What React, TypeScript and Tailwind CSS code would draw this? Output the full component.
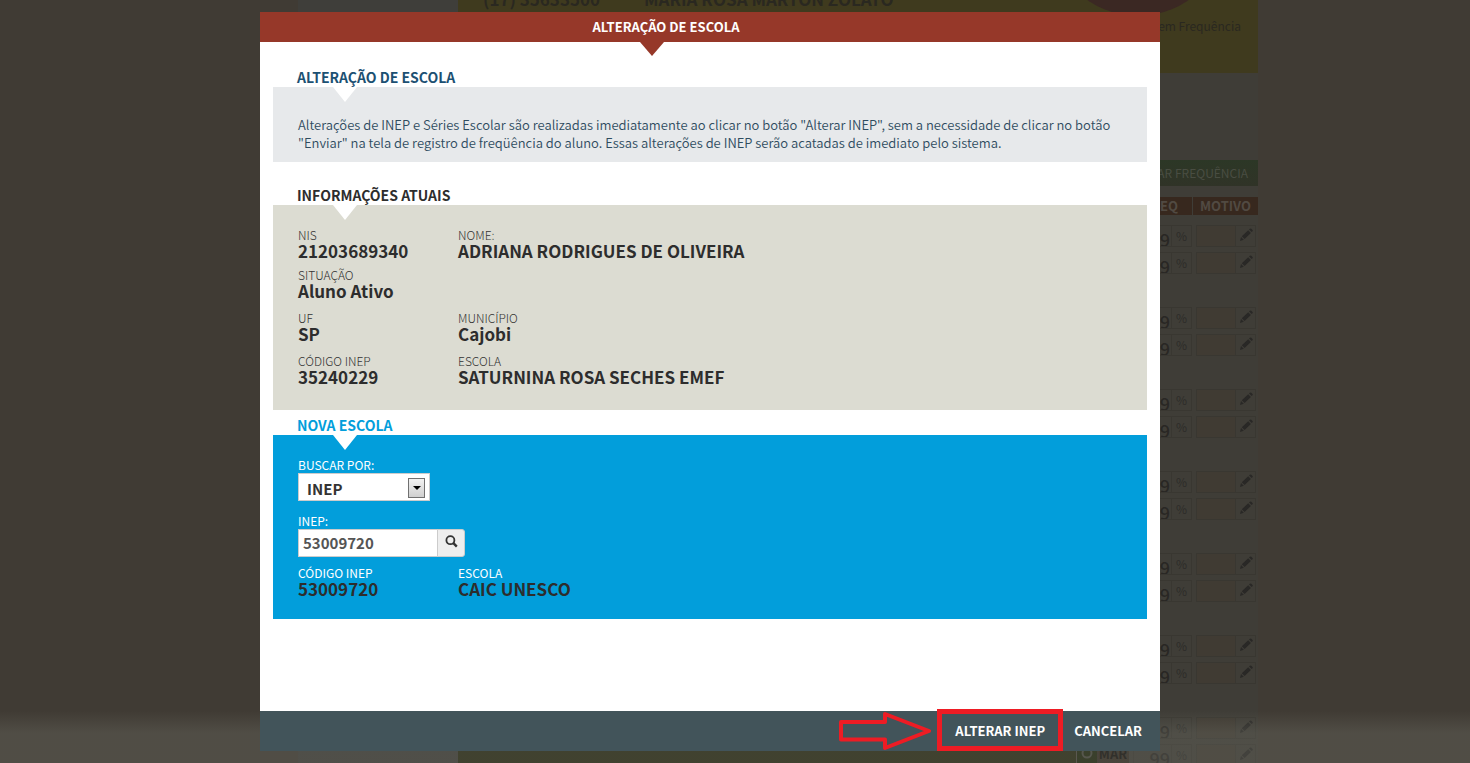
const F = "font-['Noto_Sans_CJK_JP','Noto_Sans',sans-serif]";

const pairs = [0, 1, 2, 3, 4, 5, 6];

function Pencil() {
  return (
    <svg viewBox="0 0 14 14" className="h-[14px] w-[14px]" fill="#292826" aria-hidden="true">
      <path d="M1 13l1-4 2.800 2.800zM2.800 8.300L9.200 2.200l2.700 2.700-6.300 6.200zM10 1.500l.8-.8q.8-.6 1.500 0l1.200 1.200q.6.700 0 1.400l-.8.800z" />
    </svg>
  );
}

function FrequencyRow({ month, value = "9" }: { month?: string; value?: string }) {
  return (
    <div className="flex h-[27px] items-start justify-end gap-1 pr-[2px] pt-[2px]">
      {month && (
        <div className="h-[22px] w-8 shrink-0 bg-[#352d24] text-center text-[13px] font-bold leading-[20px] text-[#0d0b09]">{month}</div>
      )}
      <div className="flex h-[22px] w-[59px] shrink-0 border border-[#393731]">
        <span className="flex-1 overflow-hidden pr-px text-right text-[18px] font-medium leading-[26px] text-[#292724]">{value}</span>
        <span className="w-5 border-l border-[#393731] text-center text-[12px] leading-[20px] text-[#2d2c29]">%</span>
      </div>
      <div className="flex h-[22px] w-[60px] shrink-0 border border-[#393731]">
        <span className="flex-1 bg-[#403b33]" />
        <span className="flex w-5 justify-center border-l border-[#393731] pt-[2px]">
          <Pencil />
        </span>
      </div>
    </div>
  );
}

function Backdrop() {
  return (
    <div className="absolute inset-0 overflow-hidden bg-[#403b34] pl-[298px]" aria-hidden="true">
      <div className="flex h-full w-[960px] bg-[#3f3d37]">
        <div className="w-40 shrink-0 bg-[#3f3e3a]" />
        <div className="flex flex-1 flex-col">
          <div className="relative h-[73px] shrink-0 overflow-hidden bg-[#3f3a1e] px-[25px] text-[#2a2820]">
            <div className="-mt-[14px] flex gap-[44px] text-[17px] font-bold leading-[26px]">
              <span>(17) 35633500</span>
              <span>MARIA ROSA MARTON ZOLATO</span>
            </div>
            <svg className="absolute -top-[160px] right-8 h-44 w-44" viewBox="0 0 176 176">
              <circle cx="88" cy="88" r="88" fill="#3b2823" />
            </svg>
            <span className="absolute right-[17px] top-4 text-[12px] leading-[20px]">Sem Frequência</span>
          </div>
          <div className="mt-[87px] flex h-[26px] shrink-0 items-center justify-end bg-linear-to-b from-[#2c3726] to-[#303327] pr-[10px] text-[12px] text-[#494d42]">
            AR FREQUÊNCIA
          </div>
          <div className="mb-[8px] mt-[11px] flex h-[18px] shrink-0 justify-end gap-px text-[13px] font-bold leading-[18px] text-[#514a42]">
            <span className="w-[60px] bg-[#37281e] pr-[14px] text-right">EQ</span>
            <span className="w-[65px] bg-[#37281e] text-center">MOTIVO</span>
          </div>
          <div className="flex min-h-0 flex-1">
            <div className="mt-[528px] flex-1 border-r border-[#514d46] bg-[#26280f]" />
            <div className="mt-[528px] w-5 bg-[#1c250a]">
              <svg viewBox="0 0 12 12" className="mx-auto -mt-1 h-3 w-3" fill="none" stroke="#4a4b42">
                <circle cx="6" cy="6" r="4.500" strokeWidth="2" />
              </svg>
            </div>
            <div className="w-[161px]">
              {pairs.map((p) => (
                <div key={p} className="h-[82px]">
                  <FrequencyRow />
                  {p === pairs.length - 1 ? <FrequencyRow month="MAR" value="99" /> : <FrequencyRow />}
                </div>
              ))}
            </div>
          </div>
        </div>
      </div>
      <div className="absolute inset-x-0 bottom-0 h-[52px] bg-linear-to-b from-transparent to-[#68685f]/40 to-[22px]" />
    </div>
  );
}

function Notch() {
  return (
    <svg className="absolute left-[60px] top-0 h-[15px] w-6" viewBox="0 0 24 15" aria-hidden="true">
      <path d="M0 0h24L12 15z" fill="#fff" />
    </svg>
  );
}

function Field({ label, value, light = false }: { label: string; value: string; light?: boolean }) {
  return (
    <div>
      <dt className={light ? "text-[12px] leading-[16px] text-white" : "text-[12px] font-light leading-[16px] text-[#333]"}>{label}</dt>
      <dd className="text-[17px] font-bold leading-[16px] text-[#2d2d2d]">{value}</dd>
    </div>
  );
}

export default function App() {
  return (
    <div className={`relative min-h-screen overflow-hidden pb-3 pl-[260px] pr-[310px] pt-3 ${F}`}>
      <Backdrop />
      <div role="dialog" aria-labelledby="dialog-title" className="relative flex min-h-[739px] flex-col bg-white">
        <header className="relative h-[30px] bg-[#963829] pr-[88px] text-center">
          <h1 id="dialog-title" className="text-[13px] font-bold leading-[30px] text-white">ALTERAÇÃO DE ESCOLA</h1>
          <svg className="absolute left-[380px] top-[30px] h-[14px] w-6" viewBox="0 0 24 14" aria-hidden="true">
            <path d="M0 0h24L12 14z" fill="#963829" />
          </svg>
        </header>

        <main className="flex-1 px-[13px]">
          <section className="pt-[25px]">
            <h2 className="pl-6 text-[14px] font-bold leading-[20px] text-[#1c5072]">ALTERAÇÃO DE ESCOLA</h2>
            <div className="relative h-[75px] bg-[#e7e9eb] px-[25px] pt-[29px]">
              <Notch />
              <p className="text-[13px] font-[350] leading-[18px] text-[#2f4c5f]">
                Alterações de INEP e Séries Escolar são realizadas imediatamente ao clicar no botão "Alterar INEP", sem a necessidade de clicar no botão "Enviar" na tela de registro de freqüência do aluno. Essas alterações de INEP serão acatadas de imediato pelo sistema.
              </p>
            </div>
          </section>

          <section className="pt-[23px]">
            <h2 className="pl-6 text-[14px] font-bold leading-[20px] text-[#2d2d2d]">INFORMAÇÕES ATUAIS</h2>
            <div className="relative h-[205px] bg-[#dcdcd2] px-[25px] pt-[22px]">
              <Notch />
              <dl className="grid grid-cols-[160px_1fr]">
                <div className="h-10"><Field label="NIS" value="21203689340" /></div>
                <div className="h-10"><Field label="NOME:" value="ADRIANA RODRIGUES DE OLIVEIRA" /></div>
                <div className="col-span-2 h-[43px]"><Field label="SITUAÇÃO" value="Aluno Ativo" /></div>
                <div className="h-[43px]"><Field label="UF" value="SP" /></div>
                <div className="h-[43px]"><Field label="MUNICÍPIO" value="Cajobi" /></div>
                <Field label="CÓDIGO INEP" value="35240229" />
                <Field label="ESCOLA" value="SATURNINA ROSA SECHES EMEF" />
              </dl>
            </div>
          </section>

          <section className="pt-[5px]">
            <h2 className="pl-6 text-[14px] font-bold leading-[20px] text-[#029edb]">NOVA ESCOLA</h2>
            <div className="relative h-[184px] bg-[#029edb] px-[25px] pt-[22px]">
              <Notch />
              <label htmlFor="search-by" className="block text-[12px] leading-[16px] text-white">BUSCAR POR:</label>
              <div className="relative h-7 w-[132px]">
                <select id="search-by" className="h-7 w-full appearance-none border border-[#ccc] bg-white pl-2 pt-1 text-[15px] font-bold leading-[20px] text-[#333]">
                  <option>INEP</option>
                </select>
                <span className="pointer-events-none absolute right-[5px] top-[5px] flex h-5 w-[17px] items-center justify-center border border-[#707070] bg-linear-to-b from-[#f2f2f2] to-[#cfcfcf]">
                  <svg viewBox="0 0 8 4" className="h-1 w-2" aria-hidden="true"><path d="M0 0h8L4 4z" /></svg>
                </span>
              </div>
              <label htmlFor="inep" className="mt-3 block text-[12px] leading-[16px] text-white">INEP:</label>
              <div className="flex h-7 w-[167px]">
                <input id="inep" defaultValue="53009720" className="w-[140px] border border-[#ccc] bg-white px-1 text-[15px] font-bold leading-[20px] text-[#555]" />
                <button type="button" aria-label="Buscar" className="-ml-px flex w-7 justify-center rounded-r-[3px] border border-[#ccc] bg-[#eee] pt-[5px]">
                  <svg viewBox="0 0 13 13" className="h-[13px] w-[13px]" fill="none" stroke="#333" aria-hidden="true">
                    <circle cx="5.400" cy="5.200" r="4" strokeWidth="1.800" />
                    <path d="M8.400 8.200l3.400 3.400" strokeWidth="2.400" />
                  </svg>
                </button>
              </div>
              <dl className="mt-2 grid grid-cols-[160px_1fr]">
                <Field label="CÓDIGO INEP" value="53009720" light />
                <Field label="ESCOLA" value="CAIC UNESCO" light />
              </dl>
            </div>
          </section>
        </main>

        <footer className="flex h-10 items-end justify-end bg-[#42545a] pr-[18px] text-[13px] font-bold text-white">
          <svg viewBox="0 0 94 40" className="mr-[6px] h-10 w-[94px]" fill="none" stroke="#ee1c24" strokeWidth="4" strokeLinejoin="round" aria-hidden="true">
            <path d="M4 11h44V3l44 17-44 17V28.500H4z" />
          </svg>
          <button type="button" className="h-[42px] w-[126px] shrink-0 border-[5px] border-[#ee1c24] pt-[2px]">ALTERAR INEP</button>
          <button type="button" className="ml-[11px] h-10">CANCELAR</button>
        </footer>
      </div>
    </div>
  );
}
